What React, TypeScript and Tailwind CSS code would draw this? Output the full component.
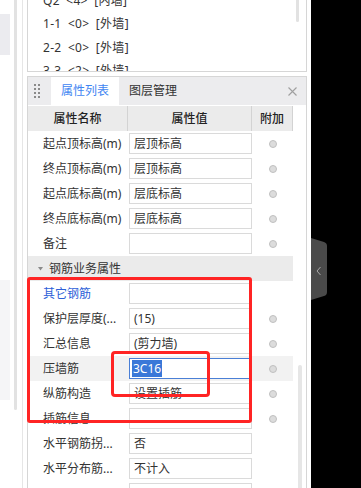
import React from "react";

type Row = {
  label: string;
  value: string;
  dot?: boolean;
  blue?: boolean;
  focus?: boolean;
};

const listItems = ["Q2 <4> [内墙]", "1-1 <0> [外墙]", "2-2 <0> [外墙]", "3-3 <2> [外墙]"];

const baseRows: Row[] = [
  { label: "起点顶标高(m)", value: "层顶标高", dot: true },
  { label: "终点顶标高(m)", value: "层顶标高", dot: true },
  { label: "起点底标高(m)", value: "层底标高", dot: true },
  { label: "终点底标高(m)", value: "层底标高", dot: true },
  { label: "备注", value: "", dot: true },
];

const rebarRows: Row[] = [
  { label: "其它钢筋", value: "", blue: true },
  { label: "保护层厚度(...", value: "(15)", dot: true },
  { label: "汇总信息", value: "(剪力墙)", dot: true },
  { label: "压墙筋", value: "3C16", dot: true, focus: true },
  { label: "纵筋构造", value: "设置插筋", dot: true },
  { label: "插筋信息", value: "", dot: true },
  { label: "水平钢筋拐...", value: "否" },
  { label: "水平分布筋...", value: "不计入" },
  { label: "", value: "" },
];

function PropRow({ row }: { row: Row }) {
  return (
    <div className={`flex h-[25px] items-center ${row.focus ? "bg-[#f2f2f2]" : ""}`}>
      <div
        className={`w-[100px] shrink-0 whitespace-nowrap pl-[15px] ${
          row.blue ? "text-[#2d5fd8]" : "text-[#333]"
        }`}
      >
        {row.label}
      </div>
      <div className="w-[124px] shrink-0 pl-[1px]">
        {row.focus ? (
          <div className="flex h-[21px] items-center border border-[#4a7fd6] bg-white pl-[2px]">
            <span className="flex h-[17px] items-center bg-[#3a78d8] px-[1px] text-white">
              {row.value}
            </span>
          </div>
        ) : (
          <div className="flex h-[21px] items-center border border-[#dadada] bg-white pl-[4px] text-[#333]">
            {row.value}
          </div>
        )}
      </div>
      <div className="flex w-[41px] shrink-0 justify-center">
        {row.dot && (
          <span className="size-[8px] rounded-full border border-[#c0c0c0] bg-[#dcdcdc]" />
        )}
      </div>
    </div>
  );
}

function LeftStrip() {
  return (
    <div className="flex w-[23px] shrink-0 border-r border-[#e6e6e6]">
      <div className="flex w-[10px] flex-col">
        <div className="h-[14px]" />
        <div className="h-[41px] bg-[#ebebef]" />
        <div className="h-[225px]" />
        <div className="h-[120px] bg-[#f5f5f7]" />
      </div>
      <div className="ml-[4px] h-[410px] w-[3px] rounded-b-full bg-[#e2e2e2]" />
    </div>
  );
}

export default function App() {
  return (
    <div className="relative flex h-[488px] w-[361px] overflow-hidden bg-white font-['Noto_Sans','Noto_Sans_CJK_SC',sans-serif] text-[12px]">
      <LeftStrip />

      <div className="ml-[4px] flex w-[280px] shrink-0 flex-col">
        {/* component list */}
        <div className="flex h-[72px] shrink-0 overflow-hidden border-x border-b border-[#d6d6d6]">
          <div className="-mt-[11px] flex-1 pl-[15px] text-[#333] [word-spacing:3px]">
            {listItems.map((t) => (
              <div key={t} className="flex h-[23.5px] items-center whitespace-nowrap tracking-[0.3px]">
                {t}
              </div>
            ))}
          </div>
          <div className="w-[11px] pl-[1px]">
            <div className="h-[22px] w-[3px] rounded-b-full bg-[#e2e2e2]" />
          </div>
        </div>

        {/* property panel */}
        <div className="mt-[4px] flex flex-1 flex-col border-x border-t border-[#d6d6d6]">
          <div className="flex h-[28px] shrink-0 bg-[#ececee]">
            <div className="flex w-[23px] items-center pl-[6px]">
              <svg width="6" height="14" viewBox="0 0 6 14" fill="#8a8a8a">
                <rect x="0" y="0" width="2" height="2" />
                <rect x="4" y="0" width="2" height="2" />
                <rect x="0" y="4" width="2" height="2" />
                <rect x="4" y="4" width="2" height="2" />
                <rect x="0" y="8" width="2" height="2" />
                <rect x="4" y="8" width="2" height="2" />
                <rect x="0" y="12" width="2" height="2" />
                <rect x="4" y="12" width="2" height="2" />
              </svg>
            </div>
            <div className="flex w-[68px] items-center justify-center bg-white text-[#3f86f2]">
              属性列表
            </div>
            <div className="flex w-[68px] items-center justify-center text-[#333]">图层管理</div>
            <div className="flex-1" />
            <div className="flex w-[28px] items-center justify-center">
              <svg width="9" height="9" viewBox="0 0 9 9" stroke="#a0a0a0" strokeWidth="1.1">
                <path d="M0.5 0.5 L8.5 8.5 M8.5 0.5 L0.5 8.5" />
              </svg>
            </div>
          </div>

          <div className="mt-[1px] flex">
            <div className="w-[265px] shrink-0">
              <div className="flex h-[25px] bg-[#ebebeb] font-medium text-[#222]">
                <div className="flex w-[100px] items-center justify-center border-r border-[#d3d3d3]">
                  属性名称
                </div>
                <div className="flex w-[124px] items-center justify-center border-r border-[#d3d3d3]">
                  属性值
                </div>
                <div className="flex w-[41px] items-center justify-center border-r border-[#d3d3d3]">
                  附加
                </div>
              </div>

              {baseRows.map((r) => (
                <PropRow key={r.label} row={r} />
              ))}

              <div className="flex h-[25px] items-center bg-[#ebebeb] pl-[10px] text-[#333]">
                <svg width="5" height="4" viewBox="0 0 5 4" fill="#8a8a8a">
                  <path d="M0 0 L5 0 L2.5 3.5 Z" />
                </svg>
                <span className="ml-[6px]">钢筋业务属性</span>
              </div>

              {rebarRows.map((r, i) => (
                <PropRow key={i} row={r} />
              ))}
            </div>
            <div className="flex w-[13px] flex-col pl-[5px] pt-[259px]">
              <div className="h-[200px] w-[4px] rounded-t-full bg-[#e6e6e6]" />
            </div>
          </div>
        </div>
      </div>

      <div className="ml-[4px] w-[50px] shrink-0 bg-black pt-[238px]">
        <svg width="17" height="62" viewBox="0 0 17 62">
          <path d="M0 0 L13 4 Q16 5 16 8 L16 54 Q16 57 13 58 L0 62 Z" fill="#4a4a4a" />
          <path d="M9.5 29 L6 33 L9.5 37" fill="none" stroke="#a8a8a8" strokeWidth="1" />
        </svg>
      </div>

      {/* annotation boxes */}
      <div className="absolute left-[27px] top-[277px] h-[146px] w-[225px] rounded-[3px] border-[3px] border-[#ff2424]" />
      <div className="absolute left-[111px] top-[351px] h-[46px] w-[99px] rounded-[4px] border-[3px] border-[#ff2424]" />
    </div>
  );
}
